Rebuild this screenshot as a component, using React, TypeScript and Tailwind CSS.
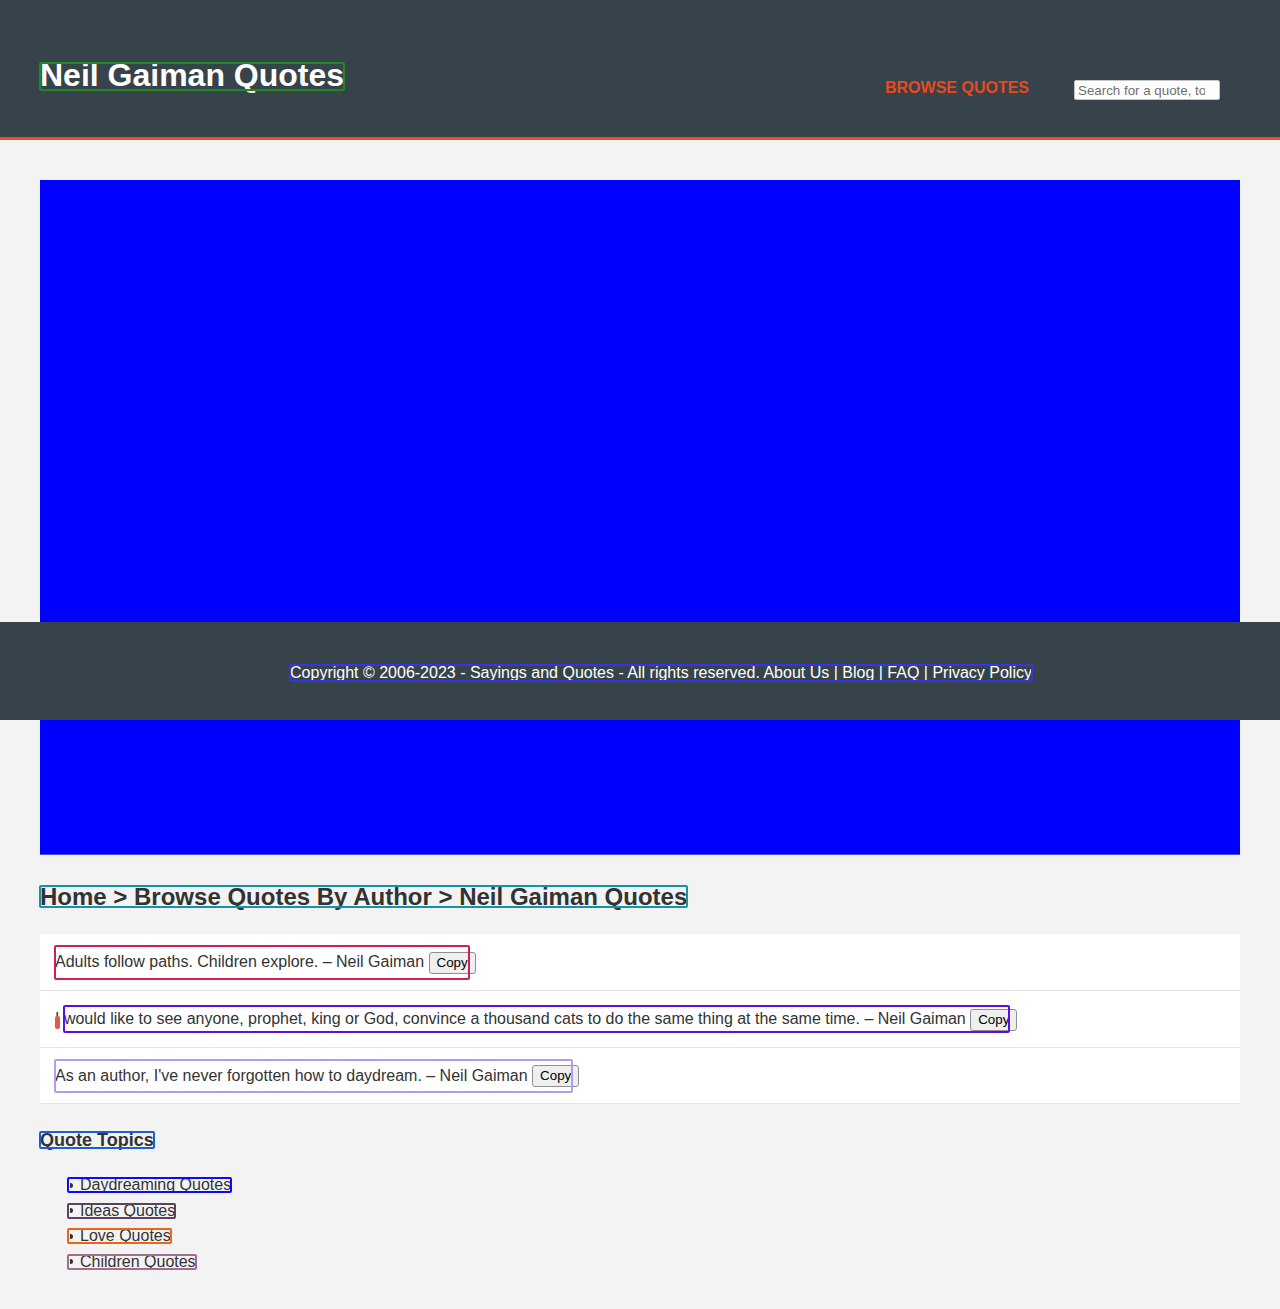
import React from "react";

const QUOTES = [
  { id: "1", text: "Adults follow paths. Children explore.", box: "border-[#d21d5b]" },
  {
    id: "2",
    text: "I would like to see anyone, prophet, king or God, convince a thousand cats to do the same thing at the same time.",
    box: "border-[#5a10e0]",
  },
  { id: "3", text: "As an author, I've never forgotten how to daydream.", box: "border-[#b49cf0]" },
];

const TOPICS = [
  { name: "Daydreaming Quotes", box: "border-[#0a0aff]" },
  { name: "Ideas Quotes", box: "border-[#5b4262]" },
  { name: "Love Quotes", box: "border-[#f0621a]" },
  { name: "Children Quotes", box: "border-[#a26c8c]" },
];

function CopyButton() {
  return (
    <button className="inline-block h-[22px] rounded-[3px] border border-[#8f8f8f] bg-[#efefef] px-[7px] align-middle text-[13.33px] leading-[18px] text-black">
      Copy
    </button>
  );
}

export default function App() {
  return (
    <div className="relative min-h-[1309px] bg-[#f3f3f3] font-['Liberation_Sans',Arial,sans-serif] text-[#333]">
      <header className="flex h-[140px] justify-between border-b-[3px] border-[#e5502a] bg-[#37434b] px-10">
        <div className="pt-[57px]">
          <h1 className="relative inline-block text-[32px] font-bold leading-[36px] text-white">
            Neil Gaiman Quotes
            <span className="pointer-events-none absolute -inset-x-[1px] top-[5px] h-[29px] rounded-[2px] border-2 border-[#218b21]" />
          </h1>
        </div>
        <nav className="mr-5 flex items-start gap-[45px] pt-[76px]">
          <a className="text-[16px] font-bold leading-[24px] text-[#e8491d]">BROWSE QUOTES</a>
          <input
            className="mt-[4px] h-[20px] w-[146px] rounded-[2px] border border-[#c4c4c4] bg-white pl-[3px] pr-[14px] text-[13.33px] text-[#333] placeholder:text-[#6f6f6f]"
            placeholder="Search for a quote, topic or author"
          />
        </nav>
      </header>

      <main className="px-10 pt-10 pb-10">
        <div className="h-[675px] border-b border-[#4b4bff] bg-[#0000ff]" />

        <h2 className="mt-[30px] text-[24px] font-bold leading-[23px]">
          <span className="relative inline-block">
            Home &gt; Browse Quotes By Author &gt; Neil Gaiman Quotes
            <span className="pointer-events-none absolute -inset-x-[1px] inset-y-0 rounded-[2px] border-2 border-[#1294a6]" />
          </span>
        </h2>

        <ul className="mt-[26px] bg-white">
          {QUOTES.map((q) => (
            <li key={q.id} className="border-b border-[#e3e3e3] px-[15px] py-4 text-[16px] leading-[23px]">
              <span className="relative inline-block">
                {q.id === "2" ? (
                  <>
                    <span className="relative">
                      I
                      <span className="pointer-events-none absolute left-0 top-[6px] h-[13px] w-[5px] rounded-[2px] bg-[#e05a52]" />
                    </span>{" "}
                    <span className="relative">
                      {q.text.slice(2)} – Neil Gaiman <CopyButton />
                      <span className={`pointer-events-none absolute -left-[1px] right-[7px] -top-[5px] -bottom-[6px] rounded-[2px] border-2 ${q.box}`} />
                    </span>
                  </>
                ) : (
                  <>
                    {q.text} – Neil Gaiman <CopyButton />
                    <span className={`pointer-events-none absolute -left-[1px] right-[6px] -top-[5px] -bottom-[6px] rounded-[2px] border-2 ${q.box}`} />
                  </>
                )}
              </span>
            </li>
          ))}
        </ul>

        <h3 className="mt-[27px] text-[18px] font-bold leading-[18px]">
          <span className="relative inline-block">
            Quote Topics
            <span className="pointer-events-none absolute -inset-x-[1px] inset-y-0 rounded-[2px] border-2 border-[#1a5fd6]" />
          </span>
        </h3>

        <ul className="mt-[23px] flex flex-col pl-[27px] text-[16px] leading-[16px]">
          {TOPICS.map((t) => (
            <li key={t.name} className="flex h-[25.5px] items-center">
              <span className="relative inline-flex h-[16px] items-center">
                <span className="ml-[3px] mr-[7px] h-[5px] w-[3px] rounded-r-full bg-[#333]" />
                {t.name}
                <span className={`pointer-events-none absolute left-0 -right-[1px] inset-y-0 rounded-[2px] border-2 ${t.box}`} />
              </span>
            </li>
          ))}
        </ul>
      </main>

      <footer className="absolute left-0 top-[622px] flex h-[98px] w-full items-center justify-center bg-[#37434b] pl-[42px] pt-[4px]">
        <p className="relative text-[16px] leading-[18px] text-white">
          Copyright © 2006-2023 - Sayings and Quotes - All rights reserved. About Us | Blog | FAQ | Privacy Policy
          <span className="pointer-events-none absolute -inset-x-[1px] inset-y-0 rounded-[2px] border-2 border-[#3636dc]" />
        </p>
      </footer>
    </div>
  );
}
